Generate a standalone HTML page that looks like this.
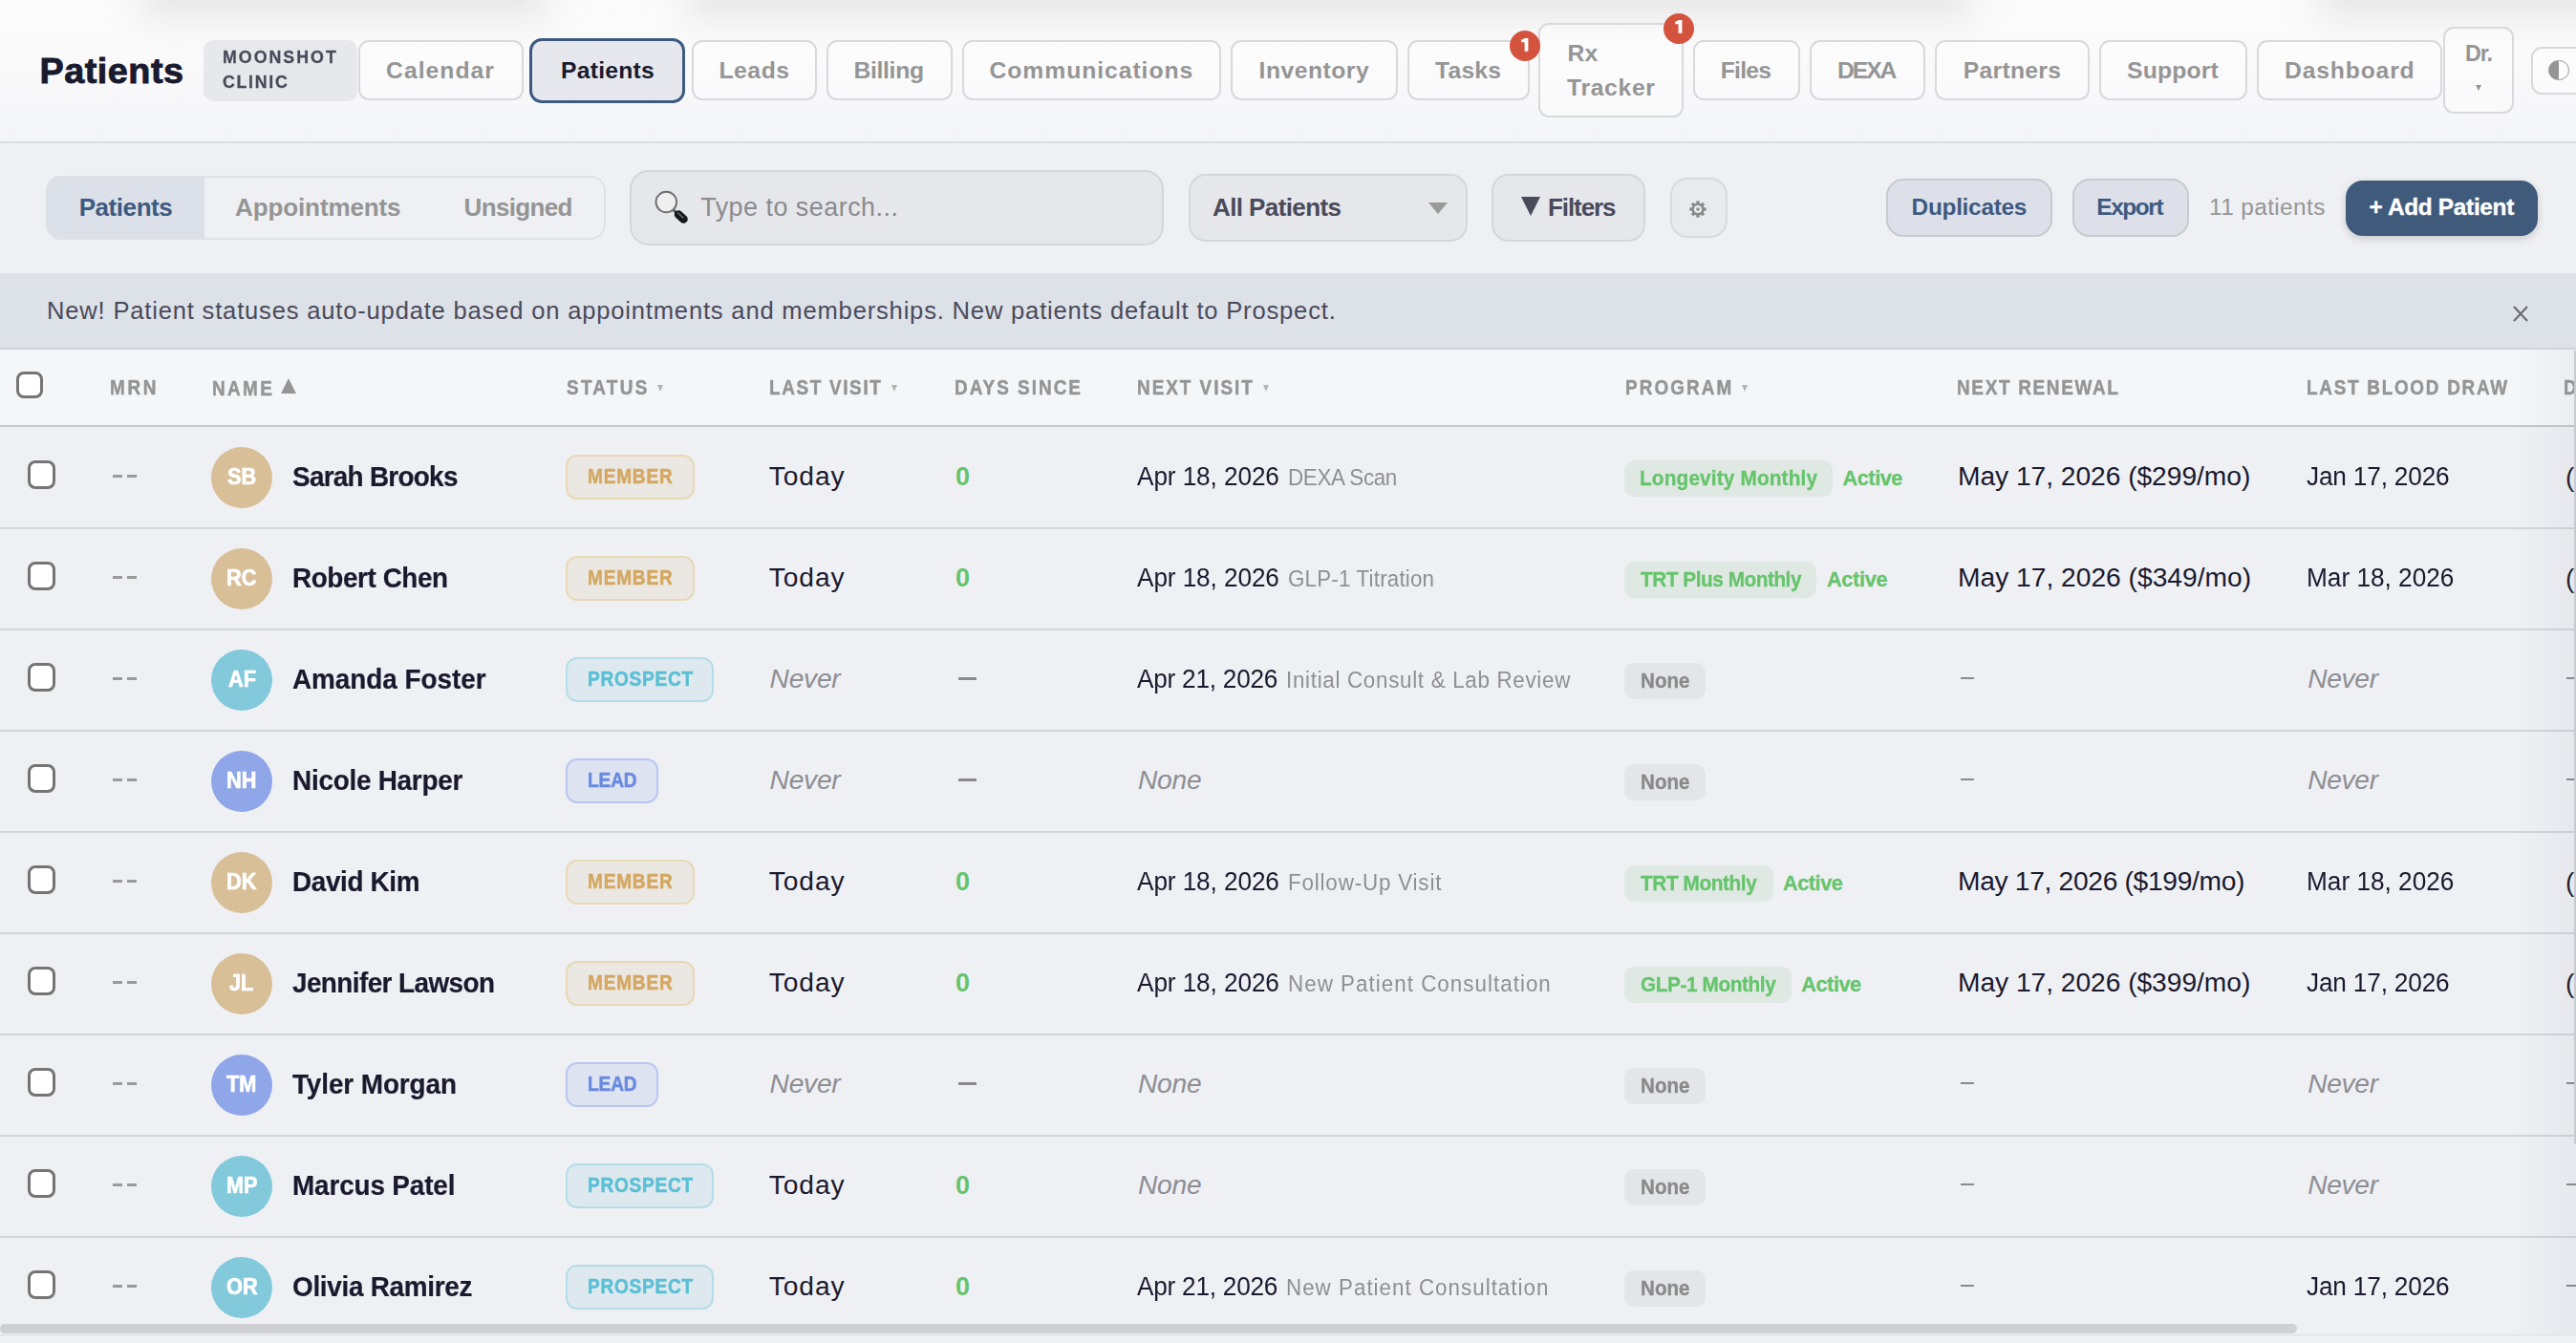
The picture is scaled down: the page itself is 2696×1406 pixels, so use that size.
<!DOCTYPE html>
<html><head><meta charset="utf-8"><title>Patients</title>
<style>
html,body{margin:0;padding:0;}
body{width:2696px;height:1406px;overflow:hidden;position:relative;background:#eff0f4;font-family:"Liberation Sans",sans-serif;}
.t{position:absolute;white-space:nowrap;font-family:"Liberation Sans",sans-serif;}
.b{position:absolute;}
</style></head><body>
<div class="b" style="left:0.0px;top:0.0px;width:2696.0px;height:149.0px;background:linear-gradient(180deg,#fbfbfc 0%,#fafafb 40%,#f4f5f7 100%);"></div>
<div class="b" style="left:150px;top:-40px;width:420px;height:58px;background:#e6e6e7;filter:blur(18px);"></div>
<div class="b" style="left:720px;top:-40px;width:1340px;height:58px;background:#e6e6e7;filter:blur(18px);"></div>
<div class="b" style="left:2430px;top:-40px;width:330px;height:58px;background:#e6e6e7;filter:blur(18px);"></div>
<div class="b" style="left:0.0px;top:148.0px;width:2696.0px;height:2.0px;background:#dcdde1;"></div>
<div class="t" style="left:41.60px;top:53px;font-size:37.79px;line-height:42px;font-weight:700;font-style:normal;letter-spacing:0.485px;color:#1a1a2e;-webkit-text-stroke:0.9px #1a1a2e;">Patients</div>
<div class="b" style="left:213.0px;top:42.0px;width:160.5px;height:63.7px;background:#e7e8eb;border-radius:10px;"></div>
<div class="t" style="left:233.40px;top:49px;font-size:18.90px;line-height:21px;font-weight:700;font-style:normal;letter-spacing:2.158px;color:#4a4a5a;transform:scaleX(0.94);transform-origin:0 0;-webkit-text-stroke:0.3px #4a4a5a;">MOONSHOT</div>
<div class="t" style="left:233.40px;top:75px;font-size:18.90px;line-height:21px;font-weight:700;font-style:normal;letter-spacing:1.830px;color:#4a4a5a;transform:scaleX(0.94);transform-origin:0 0;-webkit-text-stroke:0.3px #4a4a5a;">CLINIC</div>
<div class="b" style="left:374.9px;top:42.2px;width:172.7px;height:63.1px;border:2px solid #d9d9dc;border-radius:11px;box-sizing:border-box;background:rgba(255,255,255,.35);"></div>
<div class="t" style="left:404.00px;top:60px;font-size:24.71px;line-height:27px;font-weight:700;font-style:normal;letter-spacing:1.038px;color:#959595;">Calendar</div>
<div class="b" style="left:554.4px;top:40.0px;width:163.0px;height:67.6px;border:3.5px solid #3d5a80;border-radius:13px;box-sizing:border-box;background:#e6e8ee;"></div>
<div class="t" style="left:587.00px;top:60px;font-size:24.71px;line-height:27px;font-weight:700;font-style:normal;letter-spacing:0.240px;color:#1a1a2e;">Patients</div>
<div class="b" style="left:724.0px;top:42.2px;width:131.0px;height:63.1px;border:2px solid #d9d9dc;border-radius:11px;box-sizing:border-box;background:rgba(255,255,255,.35);"></div>
<div class="t" style="left:752.50px;top:60px;font-size:24.71px;line-height:27px;font-weight:700;font-style:normal;letter-spacing:0.523px;color:#959595;">Leads</div>
<div class="b" style="left:864.7px;top:42.2px;width:132.3px;height:63.1px;border:2px solid #d9d9dc;border-radius:11px;box-sizing:border-box;background:rgba(255,255,255,.35);"></div>
<div class="t" style="left:893.50px;top:60px;font-size:24.71px;line-height:27px;font-weight:700;font-style:normal;letter-spacing:-0.331px;color:#959595;">Billing</div>
<div class="b" style="left:1006.7px;top:42.2px;width:271.1px;height:63.1px;border:2px solid #d9d9dc;border-radius:11px;box-sizing:border-box;background:rgba(255,255,255,.35);"></div>
<div class="t" style="left:1035.50px;top:60px;font-size:24.71px;line-height:27px;font-weight:700;font-style:normal;letter-spacing:0.951px;color:#959595;">Communications</div>
<div class="b" style="left:1287.7px;top:42.2px;width:175.3px;height:63.1px;border:2px solid #d9d9dc;border-radius:11px;box-sizing:border-box;background:rgba(255,255,255,.35);"></div>
<div class="t" style="left:1317.60px;top:60px;font-size:24.71px;line-height:27px;font-weight:700;font-style:normal;letter-spacing:0.485px;color:#959595;">Inventory</div>
<div class="b" style="left:1472.5px;top:42.2px;width:128.3px;height:63.1px;border:2px solid #d9d9dc;border-radius:11px;box-sizing:border-box;background:rgba(255,255,255,.35);"></div>
<div class="t" style="left:1502.00px;top:60px;font-size:24.71px;line-height:27px;font-weight:700;font-style:normal;letter-spacing:0.194px;color:#959595;">Tasks</div>
<div class="b" style="left:1610.4px;top:24.3px;width:151.6px;height:99.2px;border:2px solid #d9d9dc;border-radius:11px;box-sizing:border-box;background:rgba(255,255,255,.35);"></div>
<div class="t" style="left:1640.60px;top:42px;font-size:24.71px;line-height:27px;font-weight:700;font-style:normal;letter-spacing:0.000px;color:#959595;">Rx</div>
<div class="t" style="left:1640.00px;top:78px;font-size:24.71px;line-height:27px;font-weight:700;font-style:normal;letter-spacing:0.677px;color:#959595;">Tracker</div>
<div class="b" style="left:1772.0px;top:42.2px;width:112.0px;height:63.1px;border:2px solid #d9d9dc;border-radius:11px;box-sizing:border-box;background:rgba(255,255,255,.35);"></div>
<div class="t" style="left:1800.70px;top:60px;font-size:24.71px;line-height:27px;font-weight:700;font-style:normal;letter-spacing:-0.753px;color:#959595;">Files</div>
<div class="b" style="left:1893.6px;top:42.2px;width:121.4px;height:63.1px;border:2px solid #d9d9dc;border-radius:11px;box-sizing:border-box;background:rgba(255,255,255,.35);"></div>
<div class="t" style="left:1923.00px;top:60px;font-size:24.71px;line-height:27px;font-weight:700;font-style:normal;letter-spacing:-2.081px;color:#959595;">DEXA</div>
<div class="b" style="left:2024.7px;top:42.2px;width:162.3px;height:63.1px;border:2px solid #d9d9dc;border-radius:11px;box-sizing:border-box;background:rgba(255,255,255,.35);"></div>
<div class="t" style="left:2054.80px;top:60px;font-size:24.71px;line-height:27px;font-weight:700;font-style:normal;letter-spacing:0.276px;color:#959595;">Partners</div>
<div class="b" style="left:2196.6px;top:42.2px;width:155.4px;height:63.1px;border:2px solid #d9d9dc;border-radius:11px;box-sizing:border-box;background:rgba(255,255,255,.35);"></div>
<div class="t" style="left:2226.00px;top:60px;font-size:24.71px;line-height:27px;font-weight:700;font-style:normal;letter-spacing:0.182px;color:#959595;">Support</div>
<div class="b" style="left:2361.8px;top:42.2px;width:194.2px;height:63.1px;border:2px solid #d9d9dc;border-radius:11px;box-sizing:border-box;background:rgba(255,255,255,.35);"></div>
<div class="t" style="left:2391.00px;top:60px;font-size:24.71px;line-height:27px;font-weight:700;font-style:normal;letter-spacing:0.830px;color:#959595;">Dashboard</div>
<div class="b" style="left:2557.4px;top:28.2px;width:74.1px;height:91.3px;border:2px solid #d9d9dc;border-radius:11px;box-sizing:border-box;background:rgba(255,255,255,.35);"></div>
<div class="t" style="left:2579.90px;top:43px;font-size:23.26px;line-height:26px;font-weight:700;font-style:normal;letter-spacing:-1.012px;color:#959595;">Dr.</div>
<div class="b" style="left:2591px;top:88.8px;width:0;height:0;border-left:3.5px solid transparent;border-right:3.5px solid transparent;border-top:6.6px solid #959595"></div>
<div class="b" style="left:2648.6px;top:48.5px;width:71.4px;height:50.5px;border:2px solid #d9d9dc;border-radius:11px;box-sizing:border-box;background:rgba(255,255,255,.35);"></div>
<div class="b" style="left:2667.2px;top:62.8px;width:19.6px;height:19.6px;border:1.4px solid #959595;border-radius:50%;background:linear-gradient(90deg,#959595 50%,transparent 50%)"></div>
<div class="b" style="left:1579.7px;top:32.0px;width:32.0px;height:32.0px;background:#d4533f;border-radius:50%;"></div>
<svg class="b" style="left:1591.2px;top:39.8px" width="10" height="15" viewBox="0 0 10 15"><path d="M4.6 0 L8.4 0 L8.4 13.8 L4.6 13.8 L4.6 4.2 L1.2 4.2 L1.2 1.6 Q3.6 1.4 4.6 0 Z" fill="#fff"/></svg>
<div class="b" style="left:1740.8px;top:13.5px;width:32.0px;height:32.0px;background:#d4533f;border-radius:50%;"></div>
<svg class="b" style="left:1752.3px;top:21.3px" width="10" height="15" viewBox="0 0 10 15"><path d="M4.6 0 L8.4 0 L8.4 13.8 L4.6 13.8 L4.6 4.2 L1.2 4.2 L1.2 1.6 Q3.6 1.4 4.6 0 Z" fill="#fff"/></svg>
<div class="b" style="left:0.0px;top:150.0px;width:2696.0px;height:136.0px;background:#eff0f3;"></div>
<div class="b" style="left:48.1px;top:184.1px;width:586.1px;height:67.3px;border:2px solid #dfe0e4;border-radius:16px;box-sizing:border-box;"></div>
<div class="b" style="left:48.1px;top:184.1px;width:165.7px;height:67.3px;background:#dce0e8;border-radius:16px 0 0 16px;"></div>
<div class="t" style="left:82.70px;top:202px;font-size:26.02px;line-height:30px;font-weight:700;font-style:normal;letter-spacing:-0.444px;color:#3d5a80;">Patients</div>
<div class="t" style="left:246.00px;top:202px;font-size:26.02px;line-height:30px;font-weight:700;font-style:normal;letter-spacing:-0.117px;color:#959595;">Appointments</div>
<div class="t" style="left:485.60px;top:202px;font-size:26.02px;line-height:30px;font-weight:700;font-style:normal;letter-spacing:-0.676px;color:#959595;">Unsigned</div>
<div class="b" style="left:659.4px;top:178.1px;width:559.0px;height:78.8px;background:#e6e7eb;border:2px solid #d5d6da;border-radius:20px;box-sizing:border-box;"></div>
<svg class="b" style="left:680px;top:195px" width="44" height="44" viewBox="0 0 44 44"><defs><linearGradient id="hg" x1="0" y1="0" x2="1" y2="1"><stop offset="0" stop-color="#3a3f48"/><stop offset=".5" stop-color="#8d96a3"/><stop offset="1" stop-color="#111"/></linearGradient></defs><line x1="25" y1="25" x2="28" y2="28" stroke="#555" stroke-width="3"/><line x1="30" y1="29.5" x2="35.5" y2="34.5" stroke="#14161a" stroke-width="8.5" stroke-linecap="round"/><line x1="29.5" y1="28" x2="35" y2="33" stroke="#7d8590" stroke-width="1.6" stroke-linecap="round" opacity=".8"/><circle cx="17.3" cy="16.5" r="10.8" fill="#efefef" stroke="#6f6f72" stroke-width="1.9"/></svg>
<div class="t" style="left:733.20px;top:202px;font-size:26.89px;line-height:30px;font-weight:400;font-style:normal;letter-spacing:0.507px;color:#8a8a8f;">Type to search...</div>
<div class="b" style="left:1243.7px;top:182.4px;width:292.6px;height:71.0px;background:#e6e7eb;border:2px solid #d6d6da;border-radius:18px;box-sizing:border-box;"></div>
<div class="t" style="left:1269.00px;top:202px;font-size:26.02px;line-height:30px;font-weight:700;font-style:normal;letter-spacing:-0.608px;color:#4a4a5a;">All Patients</div>
<div class="b" style="left:1494.8px;top:211.7px;width:0;height:0;border-left:10px solid transparent;border-right:10px solid transparent;border-top:12.2px solid #999"></div>
<div class="b" style="left:1561.2px;top:182.4px;width:161.2px;height:71.0px;background:#e6e7eb;border:2px solid #d6d6da;border-radius:18px;box-sizing:border-box;"></div>
<div class="b" style="left:1592.2px;top:206.2px;width:0;height:0;border-left:10px solid transparent;border-right:10px solid transparent;border-top:20.4px solid #4a4a5a"></div>
<div class="t" style="left:1620.00px;top:202px;font-size:26.02px;line-height:30px;font-weight:700;font-style:normal;letter-spacing:-1.080px;color:#4a4a5a;">Filters</div>
<div class="b" style="left:1747.5px;top:186.0px;width:60.1px;height:63.4px;background:#e9eaee;border:2px solid #d9dadd;border-radius:18px;box-sizing:border-box;"></div>
<svg class="b" style="left:1767px;top:208px" width="20" height="22" viewBox="-10 -11 20 22"><g fill="#8a8a8a"><rect x="-1.7" y="-8.6" width="3.4" height="4" transform="rotate(0)"/><rect x="-1.7" y="-8.6" width="3.4" height="4" transform="rotate(45)"/><rect x="-1.7" y="-8.6" width="3.4" height="4" transform="rotate(90)"/><rect x="-1.7" y="-8.6" width="3.4" height="4" transform="rotate(135)"/><rect x="-1.7" y="-8.6" width="3.4" height="4" transform="rotate(180)"/><rect x="-1.7" y="-8.6" width="3.4" height="4" transform="rotate(225)"/><rect x="-1.7" y="-8.6" width="3.4" height="4" transform="rotate(270)"/><rect x="-1.7" y="-8.6" width="3.4" height="4" transform="rotate(315)"/><circle r="1.7"/></g><circle r="5.3" fill="none" stroke="#8a8a8a" stroke-width="2.5"/></svg>
<div class="b" style="left:1974.3px;top:187.4px;width:173.4px;height:60.9px;background:#dde0e8;border:2px solid #c8cad0;border-radius:18px;box-sizing:border-box;"></div>
<div class="t" style="left:2000.60px;top:203px;font-size:24.42px;line-height:27px;font-weight:700;font-style:normal;letter-spacing:-0.298px;color:#3d5a80;">Duplicates</div>
<div class="b" style="left:2168.6px;top:187.4px;width:122.8px;height:60.9px;background:#dde0e8;border:2px solid #c8cad0;border-radius:18px;box-sizing:border-box;"></div>
<div class="t" style="left:2194.30px;top:203px;font-size:24.42px;line-height:27px;font-weight:700;font-style:normal;letter-spacing:-1.407px;color:#3d5a80;">Export</div>
<div class="t" style="left:2312.00px;top:203px;font-size:24.42px;line-height:27px;font-weight:400;font-style:normal;letter-spacing:0.375px;color:#959595;">11 patients</div>
<div class="b" style="left:2455.0px;top:188.9px;width:200.7px;height:58.0px;background:#3f5a7b;border-radius:18px;box-shadow:0 3px 8px rgba(0,0,0,.16);"></div>
<div class="t" style="left:2479.40px;top:203px;font-size:24.42px;line-height:27px;font-weight:700;font-style:normal;letter-spacing:-0.316px;color:#ffffff;-webkit-text-stroke:0.35px #ffffff;">+ Add Patient</div>
<div class="b" style="left:0.0px;top:286.0px;width:2696.0px;height:79.0px;background:#dde1e8;"></div>
<div class="b" style="left:0.0px;top:364.0px;width:2696.0px;height:2.0px;background:#cfd3da;"></div>
<div class="t" style="left:49.00px;top:311px;font-size:25.58px;line-height:28px;font-weight:400;font-style:normal;letter-spacing:0.807px;color:#4a4a5a;">New! Patient statuses auto-update based on appointments and memberships. New patients default to Prospect.</div>
<svg class="b" style="left:2628px;top:318px" width="20" height="21" viewBox="0 0 20 21"><path d="M3 3 L17 18 M17 3 L3 18" stroke="#6a6a72" stroke-width="2.1"/></svg>
<div class="b" style="left:0.0px;top:366.0px;width:2696.0px;height:79.0px;background:#f5f6f8;"></div>
<div class="b" style="left:0.0px;top:445.2px;width:2696.0px;height:2.0px;background:#c6c8ce;"></div>
<div class="b" style="left:16.6px;top:388.5px;width:28.9px;height:28.5px;border:3px solid #747474;border-radius:8px;box-sizing:border-box;background:#fff;"></div>
<div class="t" style="left:114.80px;top:394px;font-size:21.51px;line-height:24px;font-weight:700;font-style:normal;letter-spacing:3.009px;color:#959595;transform:scaleX(0.88);transform-origin:0 0;-webkit-text-stroke:0.5px #959595;">MRN</div>
<div class="t" style="left:221.60px;top:395px;font-size:21.51px;line-height:24px;font-weight:700;font-style:normal;letter-spacing:2.716px;color:#959595;transform:scaleX(0.88);transform-origin:0 0;-webkit-text-stroke:0.5px #959595;">NAME</div>
<div class="b" style="left:294.4px;top:396.2px;width:0;height:0;border-left:8.2px solid transparent;border-right:8.2px solid transparent;border-bottom:16.7px solid #959595"></div>
<div class="t" style="left:592.50px;top:394px;font-size:21.51px;line-height:24px;font-weight:700;font-style:normal;letter-spacing:2.587px;color:#959595;transform:scaleX(0.88);transform-origin:0 0;-webkit-text-stroke:0.5px #959595;">STATUS</div>
<div class="t" style="left:804.70px;top:394px;font-size:21.51px;line-height:24px;font-weight:700;font-style:normal;letter-spacing:1.879px;color:#959595;transform:scaleX(0.88);transform-origin:0 0;-webkit-text-stroke:0.5px #959595;">LAST VISIT</div>
<div class="t" style="left:999.00px;top:394px;font-size:21.51px;line-height:24px;font-weight:700;font-style:normal;letter-spacing:2.275px;color:#959595;transform:scaleX(0.88);transform-origin:0 0;-webkit-text-stroke:0.5px #959595;">DAYS SINCE</div>
<div class="t" style="left:1189.60px;top:394px;font-size:21.51px;line-height:24px;font-weight:700;font-style:normal;letter-spacing:2.251px;color:#959595;transform:scaleX(0.88);transform-origin:0 0;-webkit-text-stroke:0.5px #959595;">NEXT VISIT</div>
<div class="t" style="left:1700.80px;top:394px;font-size:21.51px;line-height:24px;font-weight:700;font-style:normal;letter-spacing:2.338px;color:#959595;transform:scaleX(0.88);transform-origin:0 0;-webkit-text-stroke:0.5px #959595;">PROGRAM</div>
<div class="t" style="left:2048.00px;top:394px;font-size:21.51px;line-height:24px;font-weight:700;font-style:normal;letter-spacing:1.921px;color:#959595;transform:scaleX(0.88);transform-origin:0 0;-webkit-text-stroke:0.5px #959595;">NEXT RENEWAL</div>
<div class="t" style="left:2413.80px;top:394px;font-size:21.51px;line-height:24px;font-weight:700;font-style:normal;letter-spacing:1.953px;color:#959595;transform:scaleX(0.88);transform-origin:0 0;-webkit-text-stroke:0.5px #959595;">LAST BLOOD DRAW</div>
<div class="t" style="left:2683.00px;top:394px;font-size:21.51px;line-height:24px;font-weight:700;font-style:normal;letter-spacing:0.000px;color:#959595;transform:scaleX(0.88);transform-origin:0 0;-webkit-text-stroke:0.5px #959595;">D</div>
<div class="b" style="left:687.6px;top:403px;width:0;height:0;border-left:3.8px solid transparent;border-right:3.8px solid transparent;border-top:7px solid #b3b3b3"></div>
<div class="b" style="left:932.5px;top:403px;width:0;height:0;border-left:3.8px solid transparent;border-right:3.8px solid transparent;border-top:7px solid #b3b3b3"></div>
<div class="b" style="left:1321.7px;top:403px;width:0;height:0;border-left:3.8px solid transparent;border-right:3.8px solid transparent;border-top:7px solid #b3b3b3"></div>
<div class="b" style="left:1823px;top:403px;width:0;height:0;border-left:3.8px solid transparent;border-right:3.8px solid transparent;border-top:7px solid #b3b3b3"></div>
<div class="b" style="left:28.6px;top:482.3px;width:29.3px;height:29.3px;border:3px solid #747474;border-radius:8px;box-sizing:border-box;background:#fff;"></div>
<div class="b" style="left:117.5px;top:496.5px;width:10.0px;height:3.0px;background:#9a9a9a;"></div>
<div class="b" style="left:132.5px;top:496.5px;width:10.4px;height:3.0px;background:#9a9a9a;"></div>
<div class="b" style="left:221.1px;top:468.0px;width:64.0px;height:64.0px;background:#d8bf98;border-radius:50%;"></div>
<div class="t" style="left:237.99px;top:486px;font-size:23.40px;line-height:26px;font-weight:700;font-style:normal;letter-spacing:0.000px;color:#fff;transform:scaleX(0.93);transform-origin:0 0;-webkit-text-stroke:0.7px #fff;">SB</div>
<div class="t" style="left:305.50px;top:482px;font-size:29.36px;line-height:33px;font-weight:700;font-style:normal;letter-spacing:-0.761px;color:#1a1a2e;transform:scaleX(0.95);transform-origin:0 0;-webkit-text-stroke:0.2px #1a1a2e;">Sarah Brooks</div>
<div class="b" style="left:592.4px;top:476.1px;width:134.2px;height:47.4px;background:#ebe7e2;border:2px solid #e8d8b6;border-radius:12px;box-sizing:border-box;"></div>
<div class="t" style="left:614.80px;top:487px;font-size:21.22px;line-height:23px;font-weight:700;font-style:normal;letter-spacing:0.850px;color:#d4a862;transform:scaleX(0.9);transform-origin:0 0;-webkit-text-stroke:0.55px #d4a862;">MEMBER</div>
<div class="t" style="left:804.80px;top:482px;font-size:28.20px;line-height:32px;font-weight:400;font-style:normal;letter-spacing:0.892px;color:#1a1a2e;">Today</div>
<div class="t" style="left:999.90px;top:484px;font-size:27.03px;line-height:30px;font-weight:700;font-style:normal;letter-spacing:0.000px;color:#66c46c;">0</div>
<div class="t" style="left:1190.00px;top:482px;font-size:28.20px;line-height:32px;font-weight:400;font-style:normal;letter-spacing:-0.116px;color:#1a1a2e;transform:scaleX(0.93);transform-origin:0 0;">Apr 18, 2026</div>
<div class="t" style="left:1348.00px;top:487px;font-size:23.55px;line-height:26px;font-weight:400;font-style:normal;letter-spacing:-0.339px;color:#8e8e93;transform:scaleX(0.95);transform-origin:0 0;">DEXA Scan</div>
<div class="b" style="left:1700.0px;top:482.0px;width:217.8px;height:37.8px;background:#dfe8e3;border-radius:10px;"></div>
<div class="t" style="left:1716.00px;top:488px;font-size:21.66px;line-height:25px;font-weight:700;font-style:normal;letter-spacing:0.153px;color:#66c46c;transform:scaleX(0.96);transform-origin:0 0;-webkit-text-stroke:0.3px #66c46c;">Longevity Monthly</div>
<div class="t" style="left:1928.50px;top:488px;font-size:21.66px;line-height:25px;font-weight:700;font-style:normal;letter-spacing:-0.419px;color:#66c46c;-webkit-text-stroke:0.3px #66c46c;">Active</div>
<div class="t" style="left:2049.00px;top:482px;font-size:28.20px;line-height:32px;font-weight:400;font-style:normal;letter-spacing:-0.039px;color:#1a1a2e;">May 17, 2026 ($299/mo)</div>
<div class="t" style="left:2414.00px;top:482px;font-size:28.20px;line-height:32px;font-weight:400;font-style:normal;letter-spacing:-0.191px;color:#1a1a2e;transform:scaleX(0.93);transform-origin:0 0;">Jan 17, 2026</div>
<div class="t" style="left:2685.00px;top:484px;font-size:27.62px;line-height:31px;font-weight:400;font-style:normal;letter-spacing:0.000px;color:#1a1a2e;">(</div>
<div class="b" style="left:0.0px;top:551.5px;width:2696.0px;height:2.0px;background:#d4d5da;"></div>
<div class="b" style="left:28.6px;top:588.3px;width:29.3px;height:29.3px;border:3px solid #747474;border-radius:8px;box-sizing:border-box;background:#fff;"></div>
<div class="b" style="left:117.5px;top:602.5px;width:10.0px;height:3.0px;background:#9a9a9a;"></div>
<div class="b" style="left:132.5px;top:602.5px;width:10.4px;height:3.0px;background:#9a9a9a;"></div>
<div class="b" style="left:221.1px;top:574.0px;width:64.0px;height:64.0px;background:#d8bf98;border-radius:50%;"></div>
<div class="t" style="left:237.39px;top:592px;font-size:23.40px;line-height:26px;font-weight:700;font-style:normal;letter-spacing:0.000px;color:#fff;transform:scaleX(0.93);transform-origin:0 0;-webkit-text-stroke:0.7px #fff;">RC</div>
<div class="t" style="left:305.50px;top:588px;font-size:29.36px;line-height:33px;font-weight:700;font-style:normal;letter-spacing:-0.448px;color:#1a1a2e;transform:scaleX(0.95);transform-origin:0 0;-webkit-text-stroke:0.2px #1a1a2e;">Robert Chen</div>
<div class="b" style="left:592.4px;top:582.1px;width:134.2px;height:47.4px;background:#ebe7e2;border:2px solid #e8d8b6;border-radius:12px;box-sizing:border-box;"></div>
<div class="t" style="left:614.80px;top:593px;font-size:21.22px;line-height:23px;font-weight:700;font-style:normal;letter-spacing:0.850px;color:#d4a862;transform:scaleX(0.9);transform-origin:0 0;-webkit-text-stroke:0.55px #d4a862;">MEMBER</div>
<div class="t" style="left:804.80px;top:588px;font-size:28.20px;line-height:32px;font-weight:400;font-style:normal;letter-spacing:0.892px;color:#1a1a2e;">Today</div>
<div class="t" style="left:999.90px;top:590px;font-size:27.03px;line-height:30px;font-weight:700;font-style:normal;letter-spacing:0.000px;color:#66c46c;">0</div>
<div class="t" style="left:1190.00px;top:588px;font-size:28.20px;line-height:32px;font-weight:400;font-style:normal;letter-spacing:-0.116px;color:#1a1a2e;transform:scaleX(0.93);transform-origin:0 0;">Apr 18, 2026</div>
<div class="t" style="left:1348.00px;top:593px;font-size:23.55px;line-height:26px;font-weight:400;font-style:normal;letter-spacing:0.193px;color:#8e8e93;transform:scaleX(0.95);transform-origin:0 0;">GLP-1 Titration</div>
<div class="b" style="left:1700.0px;top:588.0px;width:201.4px;height:37.8px;background:#dfe8e3;border-radius:10px;"></div>
<div class="t" style="left:1716.80px;top:594px;font-size:21.66px;line-height:25px;font-weight:700;font-style:normal;letter-spacing:-0.490px;color:#66c46c;transform:scaleX(0.96);transform-origin:0 0;-webkit-text-stroke:0.3px #66c46c;">TRT Plus Monthly</div>
<div class="t" style="left:1912.00px;top:594px;font-size:21.66px;line-height:25px;font-weight:700;font-style:normal;letter-spacing:-0.299px;color:#66c46c;-webkit-text-stroke:0.3px #66c46c;">Active</div>
<div class="t" style="left:2049.00px;top:588px;font-size:28.20px;line-height:32px;font-weight:400;font-style:normal;letter-spacing:-0.001px;color:#1a1a2e;">May 17, 2026 ($349/mo)</div>
<div class="t" style="left:2414.00px;top:588px;font-size:28.20px;line-height:32px;font-weight:400;font-style:normal;letter-spacing:-0.004px;color:#1a1a2e;transform:scaleX(0.93);transform-origin:0 0;">Mar 18, 2026</div>
<div class="t" style="left:2685.00px;top:590px;font-size:27.62px;line-height:31px;font-weight:400;font-style:normal;letter-spacing:0.000px;color:#1a1a2e;">(</div>
<div class="b" style="left:0.0px;top:657.5px;width:2696.0px;height:2.0px;background:#d4d5da;"></div>
<div class="b" style="left:28.6px;top:694.3px;width:29.3px;height:29.3px;border:3px solid #747474;border-radius:8px;box-sizing:border-box;background:#fff;"></div>
<div class="b" style="left:117.5px;top:708.5px;width:10.0px;height:3.0px;background:#9a9a9a;"></div>
<div class="b" style="left:132.5px;top:708.5px;width:10.4px;height:3.0px;background:#9a9a9a;"></div>
<div class="b" style="left:221.1px;top:680.0px;width:64.0px;height:64.0px;background:#82c9dc;border-radius:50%;"></div>
<div class="t" style="left:238.59px;top:698px;font-size:23.40px;line-height:26px;font-weight:700;font-style:normal;letter-spacing:0.000px;color:#fff;transform:scaleX(0.93);transform-origin:0 0;-webkit-text-stroke:0.7px #fff;">AF</div>
<div class="t" style="left:305.50px;top:694px;font-size:29.36px;line-height:33px;font-weight:700;font-style:normal;letter-spacing:-0.038px;color:#1a1a2e;transform:scaleX(0.95);transform-origin:0 0;-webkit-text-stroke:0.2px #1a1a2e;">Amanda Foster</div>
<div class="b" style="left:592.4px;top:688.1px;width:155.1px;height:47.4px;background:#dde9ee;border:2px solid #b4dde8;border-radius:12px;box-sizing:border-box;"></div>
<div class="t" style="left:614.80px;top:699px;font-size:21.22px;line-height:23px;font-weight:700;font-style:normal;letter-spacing:0.815px;color:#5bbfd5;transform:scaleX(0.9);transform-origin:0 0;-webkit-text-stroke:0.55px #5bbfd5;">PROSPECT</div>
<div class="t" style="left:805.60px;top:694px;font-size:28.20px;line-height:32px;font-weight:400;font-style:italic;letter-spacing:-0.265px;color:#8e8e93;">Never</div>
<div class="b" style="left:1002.5px;top:708.8px;width:19.5px;height:3.0px;background:#8a8a8a;"></div>
<div class="t" style="left:1190.00px;top:694px;font-size:28.20px;line-height:32px;font-weight:400;font-style:normal;letter-spacing:-0.262px;color:#1a1a2e;transform:scaleX(0.93);transform-origin:0 0;">Apr 21, 2026</div>
<div class="t" style="left:1346.40px;top:699px;font-size:23.55px;line-height:26px;font-weight:400;font-style:normal;letter-spacing:0.733px;color:#8e8e93;transform:scaleX(0.95);transform-origin:0 0;">Initial Consult &amp; Lab Review</div>
<div class="b" style="left:1700.0px;top:694.0px;width:84.8px;height:37.5px;background:#e4e5e9;border-radius:10px;"></div>
<div class="t" style="left:1716.80px;top:700px;font-size:21.66px;line-height:25px;font-weight:700;font-style:normal;letter-spacing:0.023px;color:#8a8a8a;transform:scaleX(0.95);transform-origin:0 0;-webkit-text-stroke:0.35px #8a8a8a;">None</div>
<div class="b" style="left:2051.6px;top:708.8px;width:14.2px;height:2.7px;background:#8a8a8a;"></div>
<div class="t" style="left:2415.30px;top:694px;font-size:28.20px;line-height:32px;font-weight:400;font-style:italic;letter-spacing:-0.365px;color:#8e8e93;">Never</div>
<div class="b" style="left:2685.6px;top:708.8px;width:14.4px;height:2.7px;background:#8a8a8a;"></div>
<div class="b" style="left:0.0px;top:763.5px;width:2696.0px;height:2.0px;background:#d4d5da;"></div>
<div class="b" style="left:28.6px;top:800.3px;width:29.3px;height:29.3px;border:3px solid #747474;border-radius:8px;box-sizing:border-box;background:#fff;"></div>
<div class="b" style="left:117.5px;top:814.5px;width:10.0px;height:3.0px;background:#9a9a9a;"></div>
<div class="b" style="left:132.5px;top:814.5px;width:10.4px;height:3.0px;background:#9a9a9a;"></div>
<div class="b" style="left:221.1px;top:786.0px;width:64.0px;height:64.0px;background:#8fa6e8;border-radius:50%;"></div>
<div class="t" style="left:237.39px;top:804px;font-size:23.40px;line-height:26px;font-weight:700;font-style:normal;letter-spacing:0.000px;color:#fff;transform:scaleX(0.93);transform-origin:0 0;-webkit-text-stroke:0.7px #fff;">NH</div>
<div class="t" style="left:305.50px;top:800px;font-size:29.36px;line-height:33px;font-weight:700;font-style:normal;letter-spacing:-0.268px;color:#1a1a2e;transform:scaleX(0.95);transform-origin:0 0;-webkit-text-stroke:0.2px #1a1a2e;">Nicole Harper</div>
<div class="b" style="left:592.4px;top:794.1px;width:97.0px;height:47.4px;background:#dee3f2;border:2px solid #b9c7f0;border-radius:12px;box-sizing:border-box;"></div>
<div class="t" style="left:614.80px;top:805px;font-size:21.22px;line-height:23px;font-weight:700;font-style:normal;letter-spacing:-0.143px;color:#6a8ae0;transform:scaleX(0.9);transform-origin:0 0;-webkit-text-stroke:0.55px #6a8ae0;">LEAD</div>
<div class="t" style="left:805.60px;top:800px;font-size:28.20px;line-height:32px;font-weight:400;font-style:italic;letter-spacing:-0.265px;color:#8e8e93;">Never</div>
<div class="b" style="left:1002.5px;top:814.8px;width:19.5px;height:3.0px;background:#8a8a8a;"></div>
<div class="t" style="left:1191.00px;top:800px;font-size:28.20px;line-height:32px;font-weight:400;font-style:italic;letter-spacing:-0.274px;color:#8e8e93;">None</div>
<div class="b" style="left:1700.0px;top:800.0px;width:84.8px;height:37.5px;background:#e4e5e9;border-radius:10px;"></div>
<div class="t" style="left:1716.80px;top:806px;font-size:21.66px;line-height:25px;font-weight:700;font-style:normal;letter-spacing:0.023px;color:#8a8a8a;transform:scaleX(0.95);transform-origin:0 0;-webkit-text-stroke:0.35px #8a8a8a;">None</div>
<div class="b" style="left:2051.6px;top:814.8px;width:14.2px;height:2.7px;background:#8a8a8a;"></div>
<div class="t" style="left:2415.30px;top:800px;font-size:28.20px;line-height:32px;font-weight:400;font-style:italic;letter-spacing:-0.365px;color:#8e8e93;">Never</div>
<div class="b" style="left:2685.6px;top:814.8px;width:14.4px;height:2.7px;background:#8a8a8a;"></div>
<div class="b" style="left:0.0px;top:869.5px;width:2696.0px;height:2.0px;background:#d4d5da;"></div>
<div class="b" style="left:28.6px;top:906.3px;width:29.3px;height:29.3px;border:3px solid #747474;border-radius:8px;box-sizing:border-box;background:#fff;"></div>
<div class="b" style="left:117.5px;top:920.5px;width:10.0px;height:3.0px;background:#9a9a9a;"></div>
<div class="b" style="left:132.5px;top:920.5px;width:10.4px;height:3.0px;background:#9a9a9a;"></div>
<div class="b" style="left:221.1px;top:892.0px;width:64.0px;height:64.0px;background:#d8bf98;border-radius:50%;"></div>
<div class="t" style="left:237.39px;top:910px;font-size:23.40px;line-height:26px;font-weight:700;font-style:normal;letter-spacing:0.000px;color:#fff;transform:scaleX(0.93);transform-origin:0 0;-webkit-text-stroke:0.7px #fff;">DK</div>
<div class="t" style="left:305.50px;top:906px;font-size:29.36px;line-height:33px;font-weight:700;font-style:normal;letter-spacing:-0.381px;color:#1a1a2e;transform:scaleX(0.95);transform-origin:0 0;-webkit-text-stroke:0.2px #1a1a2e;">David Kim</div>
<div class="b" style="left:592.4px;top:900.1px;width:134.2px;height:47.4px;background:#ebe7e2;border:2px solid #e8d8b6;border-radius:12px;box-sizing:border-box;"></div>
<div class="t" style="left:614.80px;top:911px;font-size:21.22px;line-height:23px;font-weight:700;font-style:normal;letter-spacing:0.850px;color:#d4a862;transform:scaleX(0.9);transform-origin:0 0;-webkit-text-stroke:0.55px #d4a862;">MEMBER</div>
<div class="t" style="left:804.80px;top:906px;font-size:28.20px;line-height:32px;font-weight:400;font-style:normal;letter-spacing:0.892px;color:#1a1a2e;">Today</div>
<div class="t" style="left:999.90px;top:908px;font-size:27.03px;line-height:30px;font-weight:700;font-style:normal;letter-spacing:0.000px;color:#66c46c;">0</div>
<div class="t" style="left:1190.00px;top:906px;font-size:28.20px;line-height:32px;font-weight:400;font-style:normal;letter-spacing:-0.116px;color:#1a1a2e;transform:scaleX(0.93);transform-origin:0 0;">Apr 18, 2026</div>
<div class="t" style="left:1348.00px;top:911px;font-size:23.55px;line-height:26px;font-weight:400;font-style:normal;letter-spacing:0.876px;color:#8e8e93;transform:scaleX(0.95);transform-origin:0 0;">Follow-Up Visit</div>
<div class="b" style="left:1700.0px;top:906.0px;width:155.6px;height:37.8px;background:#dfe8e3;border-radius:10px;"></div>
<div class="t" style="left:1716.80px;top:912px;font-size:21.66px;line-height:25px;font-weight:700;font-style:normal;letter-spacing:-0.424px;color:#66c46c;transform:scaleX(0.96);transform-origin:0 0;-webkit-text-stroke:0.3px #66c46c;">TRT Monthly</div>
<div class="t" style="left:1866.00px;top:912px;font-size:21.66px;line-height:25px;font-weight:700;font-style:normal;letter-spacing:-0.439px;color:#66c46c;-webkit-text-stroke:0.3px #66c46c;">Active</div>
<div class="t" style="left:2049.00px;top:906px;font-size:28.20px;line-height:32px;font-weight:400;font-style:normal;letter-spacing:-0.315px;color:#1a1a2e;">May 17, 2026 ($199/mo)</div>
<div class="t" style="left:2414.00px;top:906px;font-size:28.20px;line-height:32px;font-weight:400;font-style:normal;letter-spacing:-0.004px;color:#1a1a2e;transform:scaleX(0.93);transform-origin:0 0;">Mar 18, 2026</div>
<div class="t" style="left:2685.00px;top:908px;font-size:27.62px;line-height:31px;font-weight:400;font-style:normal;letter-spacing:0.000px;color:#1a1a2e;">(</div>
<div class="b" style="left:0.0px;top:975.5px;width:2696.0px;height:2.0px;background:#d4d5da;"></div>
<div class="b" style="left:28.6px;top:1012.3px;width:29.3px;height:29.3px;border:3px solid #747474;border-radius:8px;box-sizing:border-box;background:#fff;"></div>
<div class="b" style="left:117.5px;top:1026.5px;width:10.0px;height:3.0px;background:#9a9a9a;"></div>
<div class="b" style="left:132.5px;top:1026.5px;width:10.4px;height:3.0px;background:#9a9a9a;"></div>
<div class="b" style="left:221.1px;top:998.0px;width:64.0px;height:64.0px;background:#d8bf98;border-radius:50%;"></div>
<div class="t" style="left:240.40px;top:1016px;font-size:23.40px;line-height:26px;font-weight:700;font-style:normal;letter-spacing:0.000px;color:#fff;transform:scaleX(0.93);transform-origin:0 0;-webkit-text-stroke:0.7px #fff;">JL</div>
<div class="t" style="left:305.50px;top:1012px;font-size:29.36px;line-height:33px;font-weight:700;font-style:normal;letter-spacing:-0.609px;color:#1a1a2e;transform:scaleX(0.95);transform-origin:0 0;-webkit-text-stroke:0.2px #1a1a2e;">Jennifer Lawson</div>
<div class="b" style="left:592.4px;top:1006.1px;width:134.2px;height:47.4px;background:#ebe7e2;border:2px solid #e8d8b6;border-radius:12px;box-sizing:border-box;"></div>
<div class="t" style="left:614.80px;top:1017px;font-size:21.22px;line-height:23px;font-weight:700;font-style:normal;letter-spacing:0.850px;color:#d4a862;transform:scaleX(0.9);transform-origin:0 0;-webkit-text-stroke:0.55px #d4a862;">MEMBER</div>
<div class="t" style="left:804.80px;top:1012px;font-size:28.20px;line-height:32px;font-weight:400;font-style:normal;letter-spacing:0.892px;color:#1a1a2e;">Today</div>
<div class="t" style="left:999.90px;top:1014px;font-size:27.03px;line-height:30px;font-weight:700;font-style:normal;letter-spacing:0.000px;color:#66c46c;">0</div>
<div class="t" style="left:1190.00px;top:1012px;font-size:28.20px;line-height:32px;font-weight:400;font-style:normal;letter-spacing:-0.116px;color:#1a1a2e;transform:scaleX(0.93);transform-origin:0 0;">Apr 18, 2026</div>
<div class="t" style="left:1348.00px;top:1017px;font-size:23.55px;line-height:26px;font-weight:400;font-style:normal;letter-spacing:1.081px;color:#8e8e93;transform:scaleX(0.95);transform-origin:0 0;">New Patient Consultation</div>
<div class="b" style="left:1700.0px;top:1012.0px;width:174.7px;height:37.8px;background:#dfe8e3;border-radius:10px;"></div>
<div class="t" style="left:1716.80px;top:1018px;font-size:21.66px;line-height:25px;font-weight:700;font-style:normal;letter-spacing:-0.423px;color:#66c46c;transform:scaleX(0.96);transform-origin:0 0;-webkit-text-stroke:0.3px #66c46c;">GLP-1 Monthly</div>
<div class="t" style="left:1885.30px;top:1018px;font-size:21.66px;line-height:25px;font-weight:700;font-style:normal;letter-spacing:-0.439px;color:#66c46c;-webkit-text-stroke:0.3px #66c46c;">Active</div>
<div class="t" style="left:2049.00px;top:1012px;font-size:28.20px;line-height:32px;font-weight:400;font-style:normal;letter-spacing:-0.039px;color:#1a1a2e;">May 17, 2026 ($399/mo)</div>
<div class="t" style="left:2414.00px;top:1012px;font-size:28.20px;line-height:32px;font-weight:400;font-style:normal;letter-spacing:-0.191px;color:#1a1a2e;transform:scaleX(0.93);transform-origin:0 0;">Jan 17, 2026</div>
<div class="t" style="left:2685.00px;top:1014px;font-size:27.62px;line-height:31px;font-weight:400;font-style:normal;letter-spacing:0.000px;color:#1a1a2e;">(</div>
<div class="b" style="left:0.0px;top:1081.5px;width:2696.0px;height:2.0px;background:#d4d5da;"></div>
<div class="b" style="left:28.6px;top:1118.3px;width:29.3px;height:29.3px;border:3px solid #747474;border-radius:8px;box-sizing:border-box;background:#fff;"></div>
<div class="b" style="left:117.5px;top:1132.5px;width:10.0px;height:3.0px;background:#9a9a9a;"></div>
<div class="b" style="left:132.5px;top:1132.5px;width:10.4px;height:3.0px;background:#9a9a9a;"></div>
<div class="b" style="left:221.1px;top:1104.0px;width:64.0px;height:64.0px;background:#8fa6e8;border-radius:50%;"></div>
<div class="t" style="left:237.39px;top:1122px;font-size:23.40px;line-height:26px;font-weight:700;font-style:normal;letter-spacing:0.000px;color:#fff;transform:scaleX(0.93);transform-origin:0 0;-webkit-text-stroke:0.7px #fff;">TM</div>
<div class="t" style="left:305.50px;top:1118px;font-size:29.36px;line-height:33px;font-weight:700;font-style:normal;letter-spacing:-0.103px;color:#1a1a2e;transform:scaleX(0.95);transform-origin:0 0;-webkit-text-stroke:0.2px #1a1a2e;">Tyler Morgan</div>
<div class="b" style="left:592.4px;top:1112.1px;width:97.0px;height:47.4px;background:#dee3f2;border:2px solid #b9c7f0;border-radius:12px;box-sizing:border-box;"></div>
<div class="t" style="left:614.80px;top:1123px;font-size:21.22px;line-height:23px;font-weight:700;font-style:normal;letter-spacing:-0.143px;color:#6a8ae0;transform:scaleX(0.9);transform-origin:0 0;-webkit-text-stroke:0.55px #6a8ae0;">LEAD</div>
<div class="t" style="left:805.60px;top:1118px;font-size:28.20px;line-height:32px;font-weight:400;font-style:italic;letter-spacing:-0.265px;color:#8e8e93;">Never</div>
<div class="b" style="left:1002.5px;top:1132.8px;width:19.5px;height:3.0px;background:#8a8a8a;"></div>
<div class="t" style="left:1191.00px;top:1118px;font-size:28.20px;line-height:32px;font-weight:400;font-style:italic;letter-spacing:-0.274px;color:#8e8e93;">None</div>
<div class="b" style="left:1700.0px;top:1118.0px;width:84.8px;height:37.5px;background:#e4e5e9;border-radius:10px;"></div>
<div class="t" style="left:1716.80px;top:1124px;font-size:21.66px;line-height:25px;font-weight:700;font-style:normal;letter-spacing:0.023px;color:#8a8a8a;transform:scaleX(0.95);transform-origin:0 0;-webkit-text-stroke:0.35px #8a8a8a;">None</div>
<div class="b" style="left:2051.6px;top:1132.8px;width:14.2px;height:2.7px;background:#8a8a8a;"></div>
<div class="t" style="left:2415.30px;top:1118px;font-size:28.20px;line-height:32px;font-weight:400;font-style:italic;letter-spacing:-0.365px;color:#8e8e93;">Never</div>
<div class="b" style="left:2685.6px;top:1132.8px;width:14.4px;height:2.7px;background:#8a8a8a;"></div>
<div class="b" style="left:0.0px;top:1187.5px;width:2696.0px;height:2.0px;background:#d4d5da;"></div>
<div class="b" style="left:28.6px;top:1224.3px;width:29.3px;height:29.3px;border:3px solid #747474;border-radius:8px;box-sizing:border-box;background:#fff;"></div>
<div class="b" style="left:117.5px;top:1238.5px;width:10.0px;height:3.0px;background:#9a9a9a;"></div>
<div class="b" style="left:132.5px;top:1238.5px;width:10.4px;height:3.0px;background:#9a9a9a;"></div>
<div class="b" style="left:221.1px;top:1210.0px;width:64.0px;height:64.0px;background:#82c9dc;border-radius:50%;"></div>
<div class="t" style="left:236.78px;top:1228px;font-size:23.40px;line-height:26px;font-weight:700;font-style:normal;letter-spacing:0.000px;color:#fff;transform:scaleX(0.93);transform-origin:0 0;-webkit-text-stroke:0.7px #fff;">MP</div>
<div class="t" style="left:305.50px;top:1224px;font-size:29.36px;line-height:33px;font-weight:700;font-style:normal;letter-spacing:-0.160px;color:#1a1a2e;transform:scaleX(0.95);transform-origin:0 0;-webkit-text-stroke:0.2px #1a1a2e;">Marcus Patel</div>
<div class="b" style="left:592.4px;top:1218.1px;width:155.1px;height:47.4px;background:#dde9ee;border:2px solid #b4dde8;border-radius:12px;box-sizing:border-box;"></div>
<div class="t" style="left:614.80px;top:1229px;font-size:21.22px;line-height:23px;font-weight:700;font-style:normal;letter-spacing:0.815px;color:#5bbfd5;transform:scaleX(0.9);transform-origin:0 0;-webkit-text-stroke:0.55px #5bbfd5;">PROSPECT</div>
<div class="t" style="left:804.80px;top:1224px;font-size:28.20px;line-height:32px;font-weight:400;font-style:normal;letter-spacing:0.892px;color:#1a1a2e;">Today</div>
<div class="t" style="left:999.90px;top:1226px;font-size:27.03px;line-height:30px;font-weight:700;font-style:normal;letter-spacing:0.000px;color:#66c46c;">0</div>
<div class="t" style="left:1191.00px;top:1224px;font-size:28.20px;line-height:32px;font-weight:400;font-style:italic;letter-spacing:-0.274px;color:#8e8e93;">None</div>
<div class="b" style="left:1700.0px;top:1224.0px;width:84.8px;height:37.5px;background:#e4e5e9;border-radius:10px;"></div>
<div class="t" style="left:1716.80px;top:1230px;font-size:21.66px;line-height:25px;font-weight:700;font-style:normal;letter-spacing:0.023px;color:#8a8a8a;transform:scaleX(0.95);transform-origin:0 0;-webkit-text-stroke:0.35px #8a8a8a;">None</div>
<div class="b" style="left:2051.6px;top:1238.8px;width:14.2px;height:2.7px;background:#8a8a8a;"></div>
<div class="t" style="left:2415.30px;top:1224px;font-size:28.20px;line-height:32px;font-weight:400;font-style:italic;letter-spacing:-0.365px;color:#8e8e93;">Never</div>
<div class="b" style="left:2685.6px;top:1238.8px;width:14.4px;height:2.7px;background:#8a8a8a;"></div>
<div class="b" style="left:0.0px;top:1293.5px;width:2696.0px;height:2.0px;background:#d4d5da;"></div>
<div class="b" style="left:28.6px;top:1330.3px;width:29.3px;height:29.3px;border:3px solid #747474;border-radius:8px;box-sizing:border-box;background:#fff;"></div>
<div class="b" style="left:117.5px;top:1344.5px;width:10.0px;height:3.0px;background:#9a9a9a;"></div>
<div class="b" style="left:132.5px;top:1344.5px;width:10.4px;height:3.0px;background:#9a9a9a;"></div>
<div class="b" style="left:221.1px;top:1316.0px;width:64.0px;height:64.0px;background:#82c9dc;border-radius:50%;"></div>
<div class="t" style="left:236.78px;top:1334px;font-size:23.40px;line-height:26px;font-weight:700;font-style:normal;letter-spacing:0.000px;color:#fff;transform:scaleX(0.93);transform-origin:0 0;-webkit-text-stroke:0.7px #fff;">OR</div>
<div class="t" style="left:305.50px;top:1330px;font-size:29.36px;line-height:33px;font-weight:700;font-style:normal;letter-spacing:-0.311px;color:#1a1a2e;transform:scaleX(0.95);transform-origin:0 0;-webkit-text-stroke:0.2px #1a1a2e;">Olivia Ramirez</div>
<div class="b" style="left:592.4px;top:1324.1px;width:155.1px;height:47.4px;background:#dde9ee;border:2px solid #b4dde8;border-radius:12px;box-sizing:border-box;"></div>
<div class="t" style="left:614.80px;top:1335px;font-size:21.22px;line-height:23px;font-weight:700;font-style:normal;letter-spacing:0.815px;color:#5bbfd5;transform:scaleX(0.9);transform-origin:0 0;-webkit-text-stroke:0.55px #5bbfd5;">PROSPECT</div>
<div class="t" style="left:804.80px;top:1330px;font-size:28.20px;line-height:32px;font-weight:400;font-style:normal;letter-spacing:0.892px;color:#1a1a2e;">Today</div>
<div class="t" style="left:999.90px;top:1332px;font-size:27.03px;line-height:30px;font-weight:700;font-style:normal;letter-spacing:0.000px;color:#66c46c;">0</div>
<div class="t" style="left:1190.00px;top:1330px;font-size:28.20px;line-height:32px;font-weight:400;font-style:normal;letter-spacing:-0.262px;color:#1a1a2e;transform:scaleX(0.93);transform-origin:0 0;">Apr 21, 2026</div>
<div class="t" style="left:1346.40px;top:1335px;font-size:23.55px;line-height:26px;font-weight:400;font-style:normal;letter-spacing:1.063px;color:#8e8e93;transform:scaleX(0.95);transform-origin:0 0;">New Patient Consultation</div>
<div class="b" style="left:1700.0px;top:1330.0px;width:84.8px;height:37.5px;background:#e4e5e9;border-radius:10px;"></div>
<div class="t" style="left:1716.80px;top:1336px;font-size:21.66px;line-height:25px;font-weight:700;font-style:normal;letter-spacing:0.023px;color:#8a8a8a;transform:scaleX(0.95);transform-origin:0 0;-webkit-text-stroke:0.35px #8a8a8a;">None</div>
<div class="b" style="left:2051.6px;top:1344.8px;width:14.2px;height:2.7px;background:#8a8a8a;"></div>
<div class="t" style="left:2414.00px;top:1330px;font-size:28.20px;line-height:32px;font-weight:400;font-style:normal;letter-spacing:-0.191px;color:#1a1a2e;transform:scaleX(0.93);transform-origin:0 0;">Jan 17, 2026</div>
<div class="b" style="left:2685.6px;top:1344.8px;width:14.4px;height:2.7px;background:#8a8a8a;"></div>
<div class="b" style="left:0.0px;top:1386.0px;width:2404.0px;height:10.0px;background:#cfd0d4;border-radius:5px;"></div>
<div class="b" style="left:0.0px;top:1396.0px;width:2696.0px;height:10.0px;background:#eff0f3;"></div>
<div class="b" style="left:0.0px;top:1396.5px;width:2696.0px;height:1.0px;background:#dcdde0;"></div>
<div class="b" style="left:2630.0px;top:366.0px;width:66.0px;height:1030.0px;background:linear-gradient(90deg,rgba(120,125,140,0) 0%,rgba(120,125,140,.07) 100%);"></div>
<div class="b" style="left:2693.8px;top:367.0px;width:2.2px;height:831.0px;background:#c9cacd;border-radius:1px;"></div>
</body></html>
